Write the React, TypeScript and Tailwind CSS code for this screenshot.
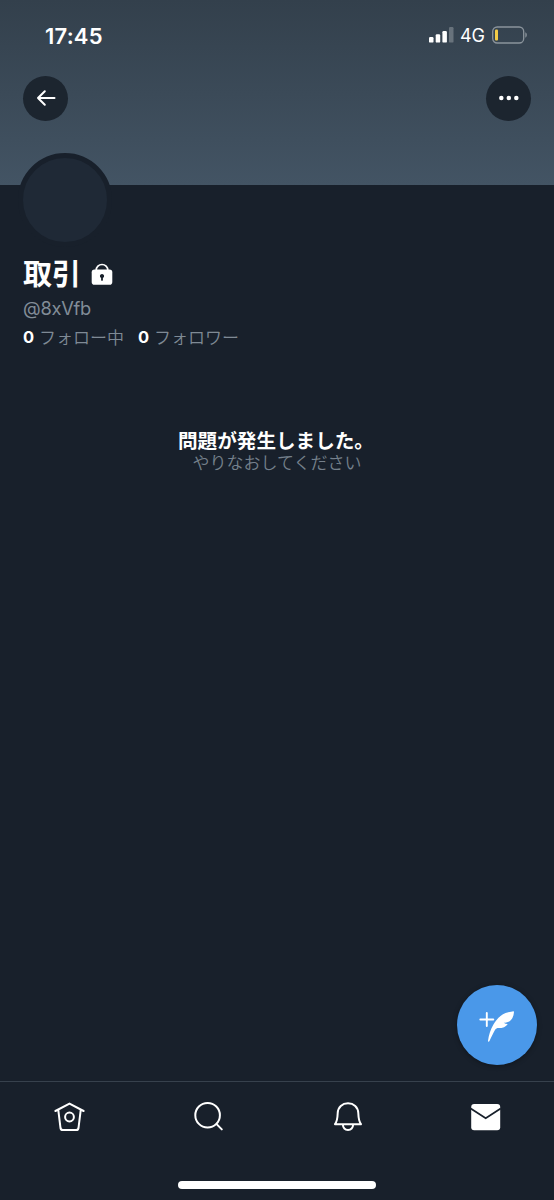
import React from "react";

function StatusBar() {
  return (
    <div className="flex h-[70px] items-center justify-between pl-[45px] pr-[26px]">
      <span className="pt-[1px] font-['Inter'] text-[22px] font-semibold leading-none tracking-[0.2px]">17:45</span>
      <div className="flex items-center">
        <svg width="26" height="18" viewBox="0 0 26 18" fill="white">
          <rect x="1" y="11" width="4.5" height="5.6" rx="1.2" />
          <rect x="7.7" y="8.2" width="4.5" height="8.4" rx="1.2" />
          <rect x="14.4" y="5" width="4.5" height="11.6" rx="1.2" />
          <rect x="21" y="1" width="4.5" height="15.6" rx="1.2" opacity=".25" />
        </svg>
        <span className="ml-[6px] w-[25px] pt-[2px] font-['Inter'] text-[18px] font-normal leading-none tracking-[-0.1px]">4G</span>
        <svg className="ml-[6px]" width="37" height="18" viewBox="0 0 37 18" fill="none">
          <rect x="1.7" y="1" width="31" height="16" rx="4.5" stroke="#8b949c" strokeWidth="1.3" />
          <rect x="4" y="3.6" width="3" height="10.8" rx="1" fill="#f4cc47" />
          <path d="M34.3 6.3c2 .7 2 4.7 0 5.4z" fill="#8b949c" />
        </svg>
      </div>
    </div>
  );
}

function Header() {
  return (
    <header className="h-[185px] bg-linear-to-b from-[#33404c] to-[#435464]">
      <StatusBar />
      <div className="flex justify-between px-[23px] pt-[5.5px]">
        <button aria-label="戻る" className="flex size-[45px] items-center justify-center rounded-full bg-[#1c252f]">
          <svg width="22" height="20" viewBox="0 0 22 20" fill="none" stroke="white" strokeWidth="2" strokeLinecap="round" strokeLinejoin="round">
            <path d="M19.5 10H3M9.8 3.2 3 10l6.8 6.8" />
          </svg>
        </button>
        <button aria-label="その他" className="flex size-[45px] items-center justify-center rounded-full bg-[#1c252f]">
          <svg width="22" height="8" viewBox="0 0 22 8" fill="white">
            <circle cx="3.3" cy="4" r="2.25" />
            <circle cx="10.8" cy="4" r="2.25" />
            <circle cx="18.3" cy="4" r="2.25" />
          </svg>
        </button>
      </div>
    </header>
  );
}

function Profile() {
  return (
    <section className="px-[23px]">
      <div className="relative -ml-[5px] -mt-[32px] size-[94px] rounded-full border-5 border-[#18202b] bg-[#1f2936]" />
      <div className="mt-[6px] flex h-[38px] items-center">
        <h1 className="font-['Noto_Sans_CJK_JP',sans-serif] text-[29px] font-bold leading-[38px]">取引</h1>
        <svg className="ml-[10px] mt-[5px]" width="22" height="24" viewBox="0 0 22 24">
          <path d="M5.2 9V7.3a5.8 5.8 0 0 1 11.6 0V9" fill="none" stroke="white" strokeWidth="1.7" />
          <rect x=".7" y="6.5" width="20.6" height="15.2" rx="2.8" fill="white" />
          <path d="M11 10.9a2.1 2.1 0 0 1 .9 4v2a.9.9 0 0 1-1.8 0v-2a2.1 2.1 0 0 1 .9-4z" fill="#18202b" />
        </svg>
      </div>
      <p className="mt-[5px] font-['Inter'] text-[18.3px] leading-[24px] tracking-[-0.25px] text-[#828d98]">@8xVfb</p>
      <div className="mt-[4px] flex h-[26px] items-center font-['Inter',sans-serif] text-[16.5px] leading-[26px] text-[#7f8a95]">
        <b className="w-[16px] font-bold text-white">0</b>
        <span className="w-[99px] font-['Noto_Sans_CJK_JP',sans-serif] text-[17px] font-[350]">フォロー中</span>
        <b className="w-[16px] font-bold text-white">0</b>
        <span className="font-['Noto_Sans_CJK_JP',sans-serif] text-[17px] font-[350]">フォロワー</span>
      </div>
    </section>
  );
}

function Navigation() {
  return (
    <nav className="h-[119px] border-t border-[#37414d]">
      <div className="flex justify-between pl-[51px] pr-[50px] pt-[16px]">
        <svg width="36" height="36" viewBox="51 1098 36 36" fill="none" stroke="white" strokeWidth="2" strokeLinecap="round" strokeLinejoin="round">
          <path d="m55.4 1111 14.1-7.4 14.1 7.4M58.3 1110.2l2.2 17.8q.3 2 2.3 2h13.4q2 0 2.3-2l2.2-17.8" />
          <circle cx="69.5" cy="1117" r="4.4" />
        </svg>
        <svg width="36" height="36" viewBox="190 1098 36 36" fill="none" stroke="white" strokeWidth="2" strokeLinecap="round">
          <circle cx="207.6" cy="1115.2" r="12.3" />
          <path d="m216.6 1124.1 5.2 5.3" />
        </svg>
        <svg width="36" height="36" viewBox="329 1098 36 36" fill="none" stroke="white" strokeWidth="2" strokeLinecap="round" strokeLinejoin="round">
          <path d="M335 1124.2c2.5-3.2 2.5-5.7 2.7-11.2.3-6 4.5-9.7 10.3-9.7s10 3.7 10.3 9.7c.2 5.5.2 8 2.7 11.2zM342.8 1124.5c.3 3.5 2.2 5.4 5.2 5.4s4.9-1.9 5.2-5.4" />
        </svg>
        <svg width="36" height="36" viewBox="468 1098 36 36">
          <rect x="471.2" y="1104" width="29" height="26.3" rx="3" fill="white" />
          <path d="m470.7 1108.4 15 9.8 15-9.8" fill="none" stroke="#18202b" strokeWidth="1.8" />
        </svg>
      </div>
      <div className="mx-auto mt-[47px] h-[8px] w-[198px] rounded-full bg-white" />
    </nav>
  );
}

export default function App() {
  return (
    <div className="flex h-[1200px] w-[554px] flex-col overflow-hidden bg-[#18202b] text-white">
      <Header />
      <Profile />
      <main className="flex-1 pt-[78px] text-center font-['Noto_Sans_CJK_JP',sans-serif]">
        <p className="pr-[2px] text-[19.6px] font-bold leading-[24px]">問題が発生しました。</p>
        <p className="text-[17px] font-[350] leading-[20px] text-[#75808c]">やりなおしてください</p>
      </main>
      <button aria-label="新しいツイート" className="mb-[16px] mr-[17px] flex size-[80px] shrink-0 items-center justify-center self-end rounded-full bg-[#4a98e9] shadow-[0_1px_5px_rgba(0,0,0,.35)]">
        <svg width="40" height="40" viewBox="477 1005 40 40">
          <path d="M486.8 1013v13M480.3 1019.5h13" stroke="white" strokeWidth="1.9" strokeLinecap="round" />
          <path d="M488 1041c.7-5.8 2.5-11.4 5.3-16.2 3.6-6.5 8.8-11.2 15-12.6 1.9-.5 3.7-.8 5.1-1 .4 0 .6.3.6.8-.2 3.1-1.2 5.9-3 8-1.7 1.9-4.4 2.6-7.3 2.7 1.2.8 2.6 1.2 4.1 1.2-1.7 2.8-5.2 4.2-9.3 4.2-1.5 0-2.6.6-3.4 1.7-1.8 3-3.6 7-5.5 11-.5 1.1-1.7 1.1-1.6.2z" fill="white" />
        </svg>
      </button>
      <Navigation />
    </div>
  );
}
